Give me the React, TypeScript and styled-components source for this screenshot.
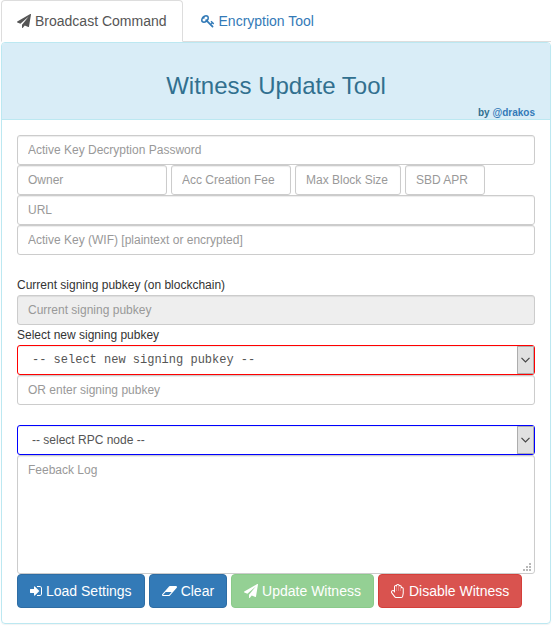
import React from "react";
import styled, { createGlobalStyle, css } from "styled-components";

const GlobalStyle = createGlobalStyle`
  *, *::before, *::after { box-sizing: border-box; }
  body {
    margin: 0;
    background: #fff;
    color: #333;
    font-family: "Liberation Sans", Arial, sans-serif;
    font-size: 14px;
    line-height: 20px;
  }
  a { color: #337ab7; text-decoration: none; }
`;

const Page = styled.main`
  padding: 0 1px 2px;
`;

const Tabs = styled.nav`
  display: flex;
  gap: 2px;
  border-bottom: 1px solid #ddd;
`;

const Tab = styled.a<{ $active?: boolean }>`
  display: flex;
  align-items: center;
  gap: 4px;
  padding: 10px 15px;
  margin-bottom: -1px;
  border: 1px solid transparent;
  border-radius: 4px 4px 0 0;
  ${(p) =>
    p.$active &&
    css`
      color: #555;
      background: #fff;
      border-color: #ddd #ddd #fff;
    `}
`;

const Panel = styled.section`
  border: 1px solid #bce8f1;
  border-radius: 4px;
  box-shadow: 0 1px 1px rgba(0, 0, 0, 0.05);
  overflow: hidden;
`;

const PanelHeader = styled.header`
  padding: 30px 15px 0;
  background: #d9edf7;
  border-bottom: 1px solid #bce8f1;
  color: #31708f;
`;

const Title = styled.h1`
  margin: 0 0 8px;
  font-size: 24px;
  line-height: 26px;
  font-weight: 400;
  text-align: center;
`;

const Byline = styled.p`
  margin: 0;
  font-size: 10px;
  line-height: 12px;
  font-weight: 700;
  text-align: right;
`;

const Form = styled.form`
  padding: 15px;
`;

const Group = styled.div`
  display: flex;
  flex-direction: column;
  margin-bottom: 20px;
`;

const Row = styled.div`
  display: flex;
  gap: 4px;
`;

const control = css`
  display: block;
  width: 100%;
  height: 30px;
  margin: 0;
  padding: 5px 10px;
  border: 1px solid #ccc;
  border-radius: 3px;
  background: #fff;
  color: #555;
  font-family: inherit;
  font-size: 12px;
  line-height: 18px;
  box-shadow: inset 0 1px 1px rgba(0, 0, 0, 0.075);
  &::placeholder { color: #999; opacity: 1; }
`;

const Input = styled.input<{ $width?: number }>`
  ${control}
  ${(p) => p.$width && `width: ${p.$width}px;`}
  &:disabled { background: #eee; }
`;

const Label = styled.label`
  font-size: 12px;
  line-height: 20px;
`;

const SelectBox = styled.div`
  position: relative;
`;

const Select = styled.select<{ $accent: string; $mono?: boolean }>`
  ${control}
  appearance: none;
  padding: 5px 30px 5px 14px;
  border: 1px solid ${(p) => p.$accent};
  ${(p) => p.$mono && `font-family: "Liberation Mono", "Courier New", monospace;`}
`;

const Arrow = styled.span`
  position: absolute;
  top: 1px;
  right: 1px;
  bottom: 1px;
  width: 17px;
  display: flex;
  align-items: center;
  justify-content: center;
  background: #e1e1e1;
  border: 1px solid #adadad;
  pointer-events: none;
`;

const LogBox = styled.div`
  position: relative;
`;

const Log = styled.textarea`
  ${control}
  height: 119px;
  resize: vertical;
  &::-webkit-resizer { background: transparent; }
`;

const Grip = styled.svg`
  position: absolute;
  right: 4px;
  bottom: 3px;
  pointer-events: none;
`;

const Actions = styled.div`
  display: flex;
  flex-wrap: wrap;
  gap: 4px;
`;

const tones = {
  primary: ["#337ab7", "#2e6da4"],
  success: ["#5cb85c", "#4cae4c"],
  danger: ["#d9534f", "#d43f3a"],
};

const Button = styled.button<{ $tone: keyof typeof tones }>`
  display: flex;
  align-items: center;
  gap: 4px;
  padding: 6px 12px;
  border: 1px solid ${(p) => tones[p.$tone][1]};
  border-radius: 4px;
  background: ${(p) => tones[p.$tone][0]};
  color: #fff;
  font-family: inherit;
  font-size: 14px;
  line-height: 20px;
  white-space: nowrap;
  cursor: pointer;
  &:disabled { opacity: 0.65; cursor: not-allowed; }
`;

const Glyph = styled.svg`
  flex: none;
  fill: currentColor;
`;

const icons = {
  plane: {
    w: 14,
    box: "0 0 1792 1792",
    d: "M1764 11q33 24 27 64l-256 1536q-5 29-32 45-14 8-31 8-11 0-24-5l-453-185-242 295q-18 23-49 23-13 0-22-4-19-7-30.500-23.500t-11.500-36.500v-349l864-1059-1069 925-395-162q-37-14-40-55-2-40 32-59l1664-960q15-9 32-9 20 0 36 11z",
  },
  key: {
    w: 14,
    box: "0 0 1792 1792",
    d: "M832 512q0-80-56-136t-136-56-136 56-56 136q0 42 19 83-41-19-83-19-80 0-136 56t-56 136 56 136 136 56 136-56 56-136q0-42-19-83 41 19 83 19 80 0 136-56t56-136zm851 704q0 17-49 66t-66 49q-9 0-28.500-16t-36.500-33-38.500-40-24.500-26l-96 96 220 220q28 28 28 68 0 42-39 81t-81 39q-40 0-68-28l-671-671q-176 131-365 131-163 0-265.500-102.500t-102.500-265.500q0-160 95-313t248-248 313-95q163 0 265.500 102.500t102.500 265.500q0 189-131 365l355 355 96-96q-3-3-26-24.500t-40-38.500-33-36.500-16-28.500q0-17 49-66t66-49q13 0 23 10 6 6 46 44.500t82 79.500 86.500 86 73 78 28.500 41z",
  },
  signIn: {
    w: 12,
    box: "128 0 1536 1792",
    d: "M1312 896q0 26-19 45l-544 544q-19 19-45 19t-45-19-19-45v-288h-448q-26 0-45-19t-19-45v-384q0-26 19-45t45-19h448v-288q0-26 19-45t45-19 45 19l544 544q19 19 19 45zm352-352v704q0 119-84.500 203.500t-203.500 84.500h-320q-13 0-22.500-9.500t-9.500-22.500q0-4-1-20t-.5-26.500 3-23.500 10-19.500 20.500-6.500h320q66 0 113-47t47-113v-704q0-66-47-113t-113-47h-312l-11.500-1-11.500-3-8-5.500-7-9-2-13.500q0-4-1-20t-.5-26.500 3-23.500 10-19.500 20.500-6.500h320q119 0 203.500 84.500t84.500 203.500z",
  },
  eraser: {
    w: 15,
    box: "0 0 1920 1792",
    d: "M896 1408l336-384h-768l-336 384h768zM1909 331q15 34 9.500 71.500t-30.500 65.500l-896 1024q-38 44-96 44h-768q-38 0-69.500-20.500t-47.500-54.500q-15-34-9.500-71.500t30.500-65.500l896-1024q38-44 96-44h768q38 0 69.500 20.500t47.500 54.500z",
  },
  hand: {
    w: 14,
    box: "0 0 1792 1792",
    d: "M880 128q-46 0-79 33t-33 79v656h-32v-528q0-46-33-79t-79-33-79 33-33 79v784l-154-205q-38-51-102-51-53 0-90.500 37.500t-37.500 90.500q0 43 26 77l384 512q38 51 102 51h688q34 0 61-22t34-56l76-405q5-32 5-59v-498q0-46-33-79t-79-33-79 33-33 79v272h-32v-528q0-46-33-79t-79-33-79 33-33 79v528h-32v-656q0-46-33-79t-79-33zm0-128q68 0 125.500 35.500t88.500 96.500q19-4 42-4 99 0 169.500 70.500t70.500 169.500v17q105-6 180.500 64t75.500 175v498q0 40-8 83l-76 404q-14 79-76.500 131t-143.500 52h-688q-60 0-114.500-27.500t-90.500-74.500l-384-512q-51-68-51-154 0-106 75-181t181-75q78 0 128 34v-434q0-99 70.500-169.500t169.500-70.500q23 0 42 4 31-61 88.500-96.500t125.500-35.500z",
  },
};

const Icon = ({ name }: { name: keyof typeof icons }) => (
  <Glyph width={icons[name].w} height={14} viewBox={icons[name].box} aria-hidden="true">
    <path d={icons[name].d} />
  </Glyph>
);

const Chevron = () => (
  <Arrow>
    <svg width="9" height="6" viewBox="0 0 9 6" aria-hidden="true">
      <path d="M0.500 0.800L4.500 4.800L8.500 0.800" fill="none" stroke="#444" strokeWidth="1.200" />
    </svg>
  </Arrow>
);

const gripDots = [[6, 0], [3, 3], [6, 3], [0, 6], [3, 6], [6, 6]];

export default function App() {
  return (
    <Page>
      <GlobalStyle />
      <Tabs>
        <Tab href="#broadcast" $active aria-current="page">
          <Icon name="plane" />
          Broadcast Command
        </Tab>
        <Tab href="#encryption">
          <Icon name="key" />
          Encryption Tool
        </Tab>
      </Tabs>
      <Panel>
        <PanelHeader>
          <Title>Witness Update Tool</Title>
          <Byline>
            by <a href="#drakos">@drakos</a>
          </Byline>
        </PanelHeader>
        <Form onSubmit={(e) => e.preventDefault()}>
          <Group>
            <Input type="password" placeholder="Active Key Decryption Password" aria-label="Active Key Decryption Password" />
            <Row>
              <Input $width={150} placeholder="Owner" aria-label="Owner" />
              <Input $width={120} placeholder="Acc Creation Fee" aria-label="Acc Creation Fee" />
              <Input $width={106} placeholder="Max Block Size" aria-label="Max Block Size" />
              <Input $width={80} placeholder="SBD APR" aria-label="SBD APR" />
            </Row>
            <Input placeholder="URL" aria-label="URL" />
            <Input placeholder="Active Key (WIF) [plaintext or encrypted]" aria-label="Active Key (WIF)" />
          </Group>
          <Group>
            <Label htmlFor="current-key">Current signing pubkey (on blockchain)</Label>
            <Input id="current-key" placeholder="Current signing pubkey" disabled />
            <Label htmlFor="new-key">Select new signing pubkey</Label>
            <SelectBox>
              <Select id="new-key" $accent="#ff0000" $mono>
                <option>-- select new signing pubkey --</option>
              </Select>
              <Chevron />
            </SelectBox>
            <Input placeholder="OR enter signing pubkey" aria-label="OR enter signing pubkey" />
          </Group>
          <SelectBox>
            <Select $accent="#0000ff" aria-label="RPC node">
              <option>-- select RPC node --</option>
            </Select>
            <Chevron />
          </SelectBox>
          <LogBox>
            <Log placeholder="Feeback Log" aria-label="Feeback Log" />
            <Grip width="8" height="8" viewBox="0 0 8 8" fill="#b8b8b8" aria-hidden="true">
              {gripDots.map(([x, y]) => (
                <rect key={`${x}-${y}`} x={x} y={y} width="2" height="2" />
              ))}
            </Grip>
          </LogBox>
          <Actions>
            <Button type="button" $tone="primary">
              <Icon name="signIn" />
              Load Settings
            </Button>
            <Button type="button" $tone="primary">
              <Icon name="eraser" />
              Clear
            </Button>
            <Button type="button" $tone="success" disabled>
              <Icon name="plane" />
              Update Witness
            </Button>
            <Button type="button" $tone="danger">
              <Icon name="hand" />
              Disable Witness
            </Button>
          </Actions>
        </Form>
      </Panel>
    </Page>
  );
}
